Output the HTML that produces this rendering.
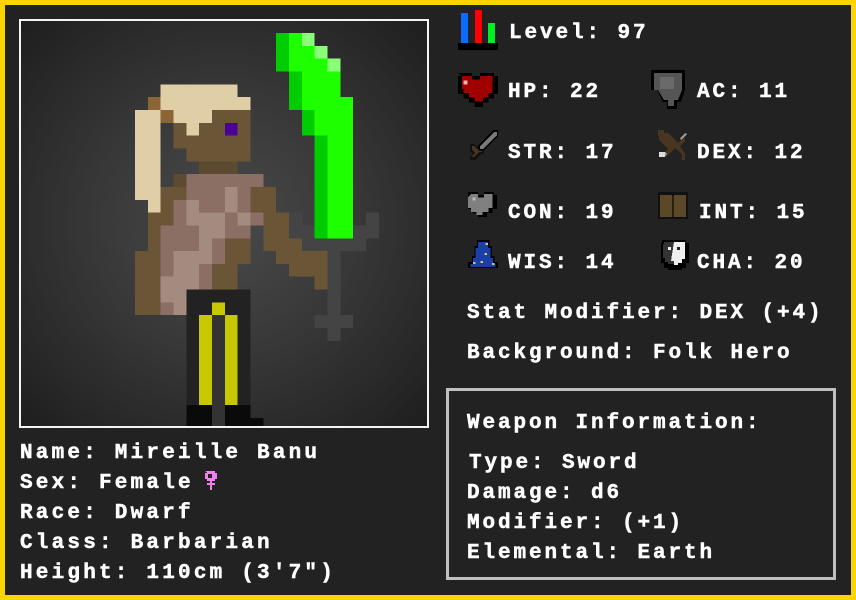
<!DOCTYPE html>
<html><head><meta charset="utf-8"><style>
html,body{margin:0;padding:0;background:#fcd400;}
#card{position:relative;width:846px;height:590px;margin:0;left:5px;top:5px;background:#222;overflow:hidden;}
body{width:856px;height:600px;overflow:hidden;}
#portrait{position:absolute;left:14px;top:14px;width:406px;height:405px;border:2px solid #f4f4f4;background:radial-gradient(ellipse at 50% 50%,#4a4a4a 0%,#383838 45%,#1e1e1e 100%);overflow:hidden;}
#ch{position:absolute;left:114px;top:12px;width:256.6px;height:397.7px;}
#wbox{position:absolute;left:441px;top:383px;width:384px;height:186px;border:3px solid #c0c0c0;}
svg text{font-family:"Liberation Mono",monospace;font-weight:bold;font-size:21px;letter-spacing:2.9px;fill:#fff;stroke:#fff;stroke-width:0.5px;}
</style></head><body>
<div id="card">
<div id="portrait">
<svg id="ch" viewBox="0 0 20 31" shape-rendering="crispEdges">
<g fill="#e0cfa6"><rect x="2" y="4" width="6" height="1"/><rect x="2" y="5" width="7" height="1"/><rect x="0" y="6" width="2" height="7"/><rect x="3" y="6" width="3" height="1"/><rect x="4" y="7" width="1" height="1"/><rect x="1" y="13" width="1" height="1"/></g>
<g fill="#8b6536"><rect x="1" y="5" width="1" height="1"/><rect x="2" y="6" width="1" height="1"/></g>
<g fill="#6b5537"><rect x="6" y="6" width="3" height="1"/><rect x="3" y="7" width="1" height="1"/><rect x="5" y="7" width="2" height="1"/><rect x="8" y="7" width="1" height="1"/><rect x="3" y="8" width="6" height="1"/><rect x="4" y="9" width="5" height="1"/>
<rect x="2" y="12" width="2" height="2"/><rect x="9" y="12" width="2" height="2"/>
<rect x="1" y="14" width="2" height="1"/><rect x="10" y="14" width="2" height="2"/>
<rect x="1" y="15" width="1" height="2"/><rect x="7" y="16" width="2" height="2"/><rect x="10" y="16" width="3" height="1"/>
<rect x="0" y="17" width="2" height="5"/><rect x="11" y="17" width="4" height="1"/><rect x="6" y="18" width="2" height="2"/><rect x="12" y="18" width="3" height="1"/><rect x="14" y="19" width="1" height="1"/></g>
<rect x="7" y="7" width="1" height="1" fill="#4b0096"/>
<g fill="#5c4a31"><rect x="5" y="10" width="3" height="1"/><rect x="3" y="11" width="1" height="1"/></g>
<g fill="#8b6e64"><rect x="4" y="11" width="6" height="1"/><rect x="4" y="12" width="5" height="1"/><rect x="3" y="13" width="1" height="1"/><rect x="5" y="13" width="2" height="1"/><rect x="8" y="13" width="1" height="1"/>
<rect x="3" y="14" width="1" height="1"/><rect x="7" y="14" width="1" height="1"/><rect x="9" y="14" width="1" height="1"/>
<rect x="2" y="15" width="3" height="2"/><rect x="7" y="15" width="2" height="1"/><rect x="6" y="16" width="1" height="1"/>
<rect x="2" y="17" width="1" height="2"/><rect x="6" y="17" width="1" height="1"/><rect x="5" y="18" width="1" height="2"/><rect x="2" y="21" width="1" height="1"/></g>
<g fill="#a48b80"><rect x="7" y="12" width="1" height="2"/><rect x="4" y="13" width="1" height="1"/><rect x="4" y="14" width="3" height="1"/><rect x="8" y="14" width="1" height="1"/><rect x="5" y="15" width="2" height="1"/><rect x="5" y="16" width="1" height="1"/><rect x="3" y="17" width="3" height="1"/><rect x="3" y="18" width="2" height="1"/><rect x="2" y="19" width="3" height="1"/><rect x="2" y="20" width="2" height="1"/><rect x="3" y="21" width="1" height="1"/></g>
<rect x="4" y="20" width="5" height="9" fill="#222"/>
<rect x="6" y="22" width="1" height="9" fill="#333"/>
<g fill="#c8c800"><rect x="6" y="21" width="1" height="1"/><rect x="5" y="22" width="1" height="7"/><rect x="7" y="22" width="1" height="7"/></g>
<g fill="#0a0a0a"><rect x="4" y="29" width="2" height="2"/><rect x="7" y="29" width="2" height="2"/><rect x="9" y="30" width="1" height="1"/></g>
<g fill="#444"><rect x="12" y="14" width="1" height="2"/><rect x="13" y="15" width="1" height="1"/><rect x="18" y="14" width="1" height="2"/><rect x="17" y="15" width="1" height="1"/><rect x="13" y="16" width="5" height="1"/><rect x="15" y="17" width="1" height="5"/><rect x="14" y="22" width="3" height="1"/><rect x="15" y="23" width="1" height="1"/></g>
<g fill="#1eff00"><rect x="12" y="0" width="1" height="1"/><rect x="12" y="1" width="2" height="1"/><rect x="12" y="2" width="3" height="1"/><rect x="13" y="3" width="3" height="2"/><rect x="13" y="5" width="4" height="1"/><rect x="14" y="6" width="3" height="2"/><rect x="15" y="8" width="2" height="8"/></g>
<g fill="#00cc00"><rect x="11" y="0" width="1" height="3"/><rect x="12" y="3" width="1" height="3"/><rect x="13" y="6" width="1" height="2"/><rect x="14" y="8" width="1" height="8"/></g>
<g fill="#88ff77"><rect x="13" y="0" width="1" height="1"/><rect x="14" y="1" width="1" height="1"/><rect x="15" y="2" width="1" height="1"/></g>
</svg>
</div>
<div id="wbox"></div>
<svg width="846" height="590" style="position:absolute;left:0;top:0" shape-rendering="crispEdges">
<g transform="translate(-5,-5)">
<rect x="461" y="13" width="7" height="30" fill="#0a6cff"/><rect x="475" y="10" width="7" height="33" fill="#ff0000"/><rect x="488" y="23" width="7" height="20" fill="#00ee22"/><rect x="458" y="43" width="40" height="7" fill="#000"/>
<g transform="translate(458,73) scale(1.38,1.06) translate(-461,-74)">
<path d="M461 74h10v3h6v-3h10v3h3v17h-3v4h-4v4h-4v4h-6v-4h-4v-4h-4v-4h-4v-17h3z" fill="#000"/>
<path d="M464 77h7v3h6v-3h9v16h-3v4h-4v4h-6v-4h-4v-4h-4v-4h-1z" fill="#a00000"/>
<rect x="465" y="81" width="3" height="4" fill="#f0b0b0"/>
</g>
<path d="M651 70h34v20l-4 12h-4v7h-10v-7h-4l-6-12h-6z" fill="#000"/>
<path d="M654 73h28v17l-4 10h-4v6h-6v-6h-4l-6-10h-4z" fill="#555"/>
<rect x="660" y="77" width="14" height="12" fill="#6a6a6a"/>
<path d="M493 130h5v6l-15 15h-5v-5z" fill="#000"/>
<path d="M494 132h3v3l-14 14h-3v-3z" fill="#7a7a7a"/>
<path d="M470 144h4l6 6h4v4h-3l-6 6h-5v-3l3-3-3-3z" fill="#111"/>
<path d="M472 146h2l5 5h3v1h-3l-5 5h-2v-1l3-3-3-3z" fill="#4a3520"/>
<path d="M658 130h6v3h4l10 10 5-5h2v3l-5 5 5 8v6h-3v-6l-7-6-5 5-4 4h-3v-3l5-5-9-9v-4h-1z" fill="#4a3520"/>
<path d="M680 138l5-5 2 1-6 6zM665 152l2 2-3 3h-4v-3z" fill="#999"/>
<rect x="659" y="152" width="6" height="5" fill="#ddd"/>
<g transform="translate(468,192) scale(1.45,1.05) translate(-470,-192)">
<path d="M470 192h7v3h4v-3h7v3h2v13h-3v4h-4v4h-6v-4h-4v-4h-3v-13z" fill="#000"/>
<path d="M472 194h5v3h4v-3h6v13h-3v4h-4v3h-4v-3h-4v-4h-2v-10z" fill="#808080"/>
<rect x="473" y="197" width="2" height="3" fill="#bbb"/>
</g>
<path d="M658 192h30v27h-30z" fill="#111"/>
<rect x="660" y="195" width="12" height="22" fill="#5a4828"/><rect x="674" y="195" width="12" height="22" fill="#5a4828"/><rect x="672" y="196" width="2" height="21" fill="#2a2010"/>
<g transform="translate(468,240) scale(1.25,1) translate(-468,-240)">
<path d="M481 240h4v6h2v10h2v6h3v6h-24v-6h3v-6h2v-10h2v-6z" fill="#000"/>
<path d="M482 242h2v6h2v10h2v6h2v3h-20v-3h2v-6h2v-10h2v-6z" fill="#1a3fa8"/>
<rect x="482" y="243" width="2" height="2" fill="#d8c070"/><rect x="481" y="253" width="2" height="2" fill="#d8c070"/><rect x="478" y="261" width="2" height="2" fill="#d8c070"/><rect x="487" y="263" width="2" height="2" fill="#d8c070"/><rect x="472" y="262" width="2" height="2" fill="#d8c070"/>
</g>
<path d="M662 240h24v3h3v20h-3v5h-4v2h-14v-2h-4v-5h-3v-20h1z" fill="#000"/>
<path d="M664 242h10v22h-6v-2h-3v-4h-2v-14h1z" fill="#333"/><path d="M674 242h11v17h-3v4h-4v2h-4v-4h-3z" fill="#eee"/>
<rect x="668" y="247" width="3" height="3" fill="#eee"/><rect x="677" y="247" width="3" height="3" fill="#222"/>
<path d="M205 471h10v2h2v6h-2v2h-3v2h3v2h-3v5h-2v-5h-3v-2h3v-2h-3v-2h-2v-6h2z" fill="#f080f0"/>
<rect x="208" y="474" width="4" height="4" fill="#222"/>
</g>
<g transform="translate(-5,-5)">
<text x="509" y="38">Level: 97</text>
<text x="508" y="97">HP: 22</text><text x="697" y="97">AC: 11</text>
<text x="508" y="158">STR: 17</text><text x="697" y="158">DEX: 12</text>
<text x="508" y="218">CON: 19</text><text x="699" y="218">INT: 15</text>
<text x="508" y="268">WIS: 14</text><text x="697" y="268">CHA: 20</text>
<text x="467" y="318">Stat Modifier: DEX (+4)</text>
<text x="467" y="358">Background: Folk Hero</text>
<text x="467" y="428">Weapon Information:</text>
<text x="469" y="468">Type: Sword</text>
<text x="467" y="498">Damage: d6</text>
<text x="467" y="528">Modifier: (+1)</text>
<text x="467" y="558">Elemental: Earth</text>
<text x="20" y="458" style="letter-spacing:3.2px">Name: Mireille Banu</text>
<text x="20" y="488" style="letter-spacing:3.2px">Sex: Female</text>
<text x="20" y="518" style="letter-spacing:3.2px">Race: Dwarf</text>
<text x="20" y="548" style="letter-spacing:3.2px">Class: Barbarian</text>
<text x="20" y="578" style="letter-spacing:3.2px">Height: 110cm (3'7")</text>
</g>
</svg>
</div>
</body></html>
